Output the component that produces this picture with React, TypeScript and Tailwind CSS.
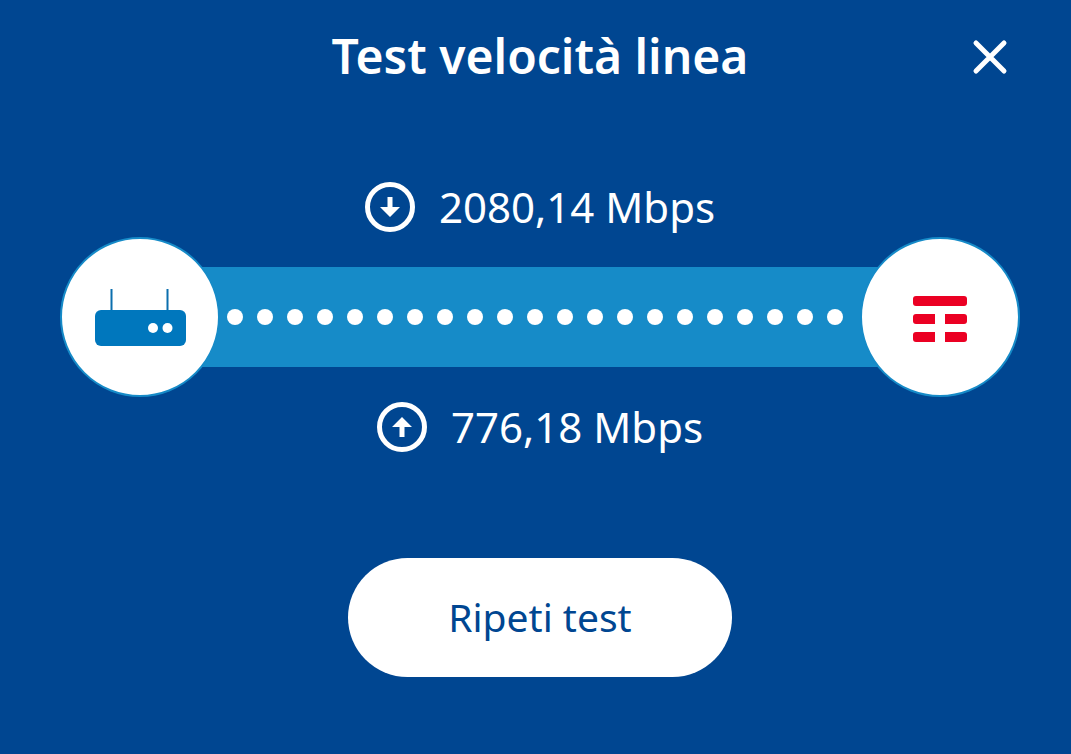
import type { ReactNode } from "react";

const DOTS = 21;

function CloseIcon() {
  return (
    <svg className="size-9" viewBox="0 0 36 36" fill="none" stroke="currentColor" strokeWidth="5" strokeLinecap="round" aria-hidden="true">
      <path d="M4 4 32 32M32 4 4 32" />
    </svg>
  );
}

function ArrowIcon({ direction }: { direction: "down" | "up" }) {
  return (
    <svg className="size-[50px] shrink-0" viewBox="0 0 50 50" aria-hidden="true">
      <circle cx="25" cy="25" r="22.5" fill="none" stroke="currentColor" strokeWidth="5" />
      <path
        fill="currentColor"
        d={direction === "down" ? "M22.5 15h5v10H35L25 35 15 25h7.5z" : "M22.5 35h5V25H35L25 15 15 25h7.5z"}
      />
    </svg>
  );
}

function RouterIcon() {
  return (
    <svg className="h-[60px] w-[92px]" viewBox="0 0 92 60" aria-hidden="true">
      <path d="M17.5 2v24M73.5 2v24" stroke="#0b6fae" strokeWidth="2" />
      <rect x="1" y="23" width="91" height="36" rx="6" fill="#0077bd" />
      <circle cx="59" cy="41" r="5" fill="#fff" />
      <circle cx="73.5" cy="41" r="5" fill="#fff" />
    </svg>
  );
}

function TimLogo() {
  return (
    <svg className="h-[50px] w-[54px]" viewBox="0 -4 54 50" fill="#eb0023" role="img" aria-label="TIM">
      <rect width="54" height="10" rx="3" />
      <path d="M3 18H22v10H3a3 3 0 0 1-3-3v-4a3 3 0 0 1 3-3z" />
      <path d="M32 18h19a3 3 0 0 1 3 3v4a3 3 0 0 1-3 3H32z" />
      <path d="M3 36H22v10H3a3 3 0 0 1-3-3v-4a3 3 0 0 1 3-3z" />
      <path d="M32 36h19a3 3 0 0 1 3 3v4a3 3 0 0 1-3 3H32z" />
    </svg>
  );
}

function Speed({ direction, value }: { direction: "down" | "up"; value: string }) {
  return (
    <div className="flex h-[60px] items-center justify-center gap-6 text-[42px] leading-none">
      <ArrowIcon direction={direction} />
      <p>{value} Mbps</p>
    </div>
  );
}

function Endpoint({ children }: { children: ReactNode }) {
  return (
    <div className="z-10 flex size-40 shrink-0 items-center justify-center rounded-full border-2 border-[#168bc8] bg-white">
      {children}
    </div>
  );
}

export default function App() {
  return (
    <main className="min-h-screen bg-[#004691] pt-[22px] pr-[51px] pb-10 pl-[60px] font-['Noto_Sans',sans-serif] text-white">
      <header className="grid h-[70px] grid-cols-[1fr_auto_1fr] items-center">
        <h1 className="col-start-2 pb-0.5 text-[48px] leading-none font-semibold">Test velocità linea</h1>
        <button type="button" aria-label="Chiudi" className="flex size-[60px] items-center justify-center justify-self-end">
          <CloseIcon />
        </button>
      </header>

      <section className="mt-[85px]">
        <Speed direction="down" value="2080,14" />

        {/* Line between router and network */}
        <div className="flex items-center">
          <Endpoint>
            <RouterIcon />
          </Endpoint>
          <div className="-mx-5 flex h-[100px] flex-1 items-center justify-between bg-[#168bc8] pr-[37px] pl-[27px]">
            {[...Array(DOTS)].map((_, i) => (
              <span key={i} className="size-4 rounded-full bg-white" />
            ))}
          </div>
          <Endpoint>
            <TimLogo />
          </Endpoint>
        </div>

        <Speed direction="up" value="776,18" />
      </section>

      <div className="mt-[101px] flex justify-center">
        <button type="button" className="h-[119px] rounded-full bg-white px-[100px] pb-0.5 text-[39px] leading-none text-[#004691]">
          Ripeti test
        </button>
      </div>
    </main>
  );
}
